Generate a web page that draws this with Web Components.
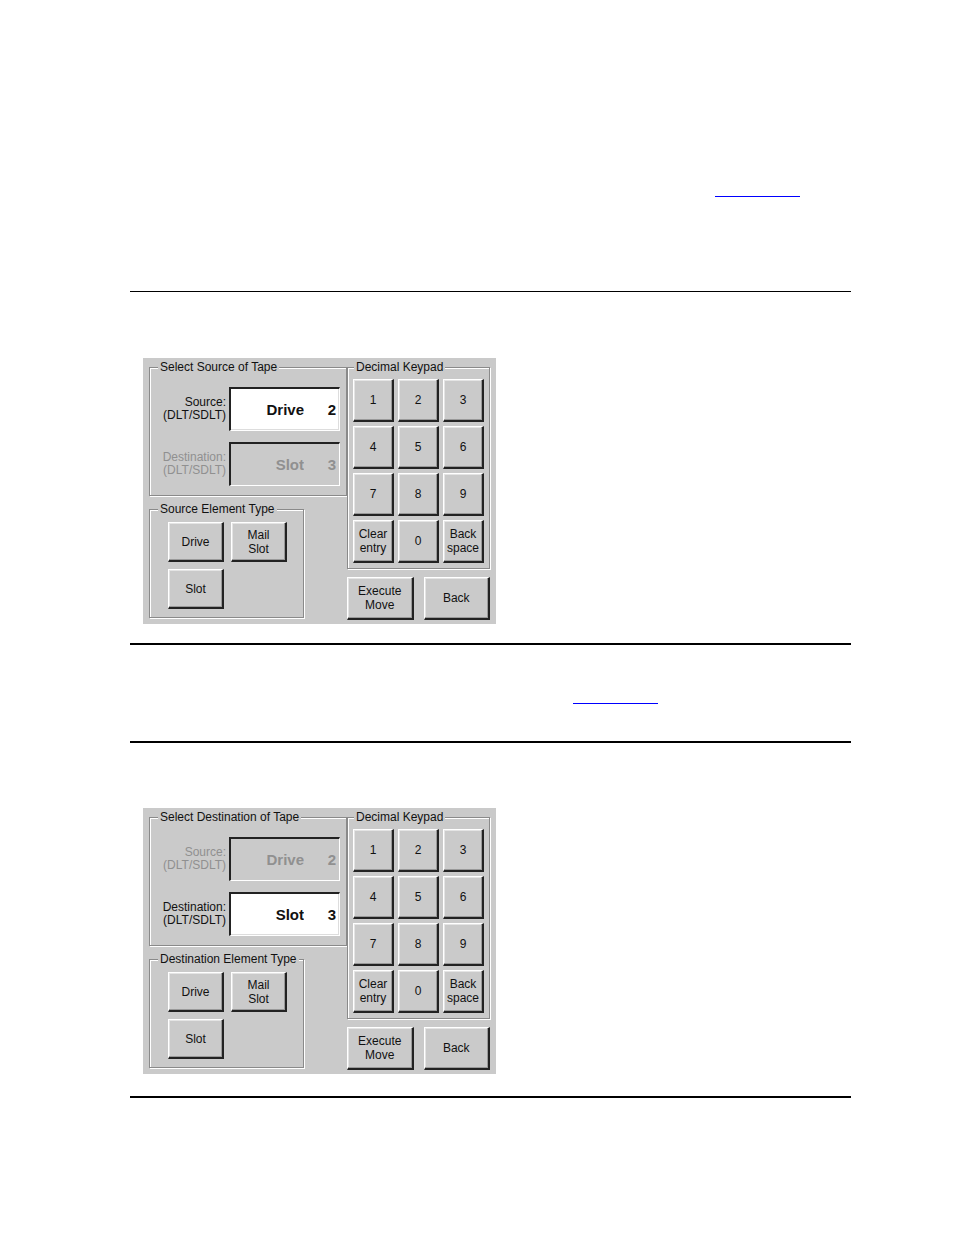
<!DOCTYPE html>
<html lang="en">
<head>
<meta charset="utf-8">
<meta name="viewport" content="width=device-width, initial-scale=1">
<title>Move Tape</title>
<style>
  body {
    margin: 0;
    background: #fff;
    color: #111;
    font: 12px/14px "Liberation Sans", Arial, sans-serif;
  }
</style>
</head>
<body>
<manual-page></manual-page>

<script>
class GroupBox extends HTMLElement {
  constructor() {
    super();
    this.attachShadow({ mode: "open" });
  }

  static get styles() {
    return /* css */`
      :host {
        display: block;
      }

      fieldset {
        margin: 0;
        min-width: 0;
        padding: 0;
        border: 1px solid #8a8a8a;
        box-shadow: 1px 1px #fff, inset 1px 1px #fff;
      }

      legend {
        margin-left: var(--legend-indent, 8px);
        padding: 0 2px;
        line-height: 16px;
        background: var(--face, #cacaca);
        white-space: nowrap;
      }

      .content {
        padding: var(--group-padding, 4px);
      }
    `;
  }

  connectedCallback() {
    this.shadowRoot.innerHTML = /* html */`
    <style>${GroupBox.styles}</style>
    <fieldset>
      <legend>${this.getAttribute("label")}</legend>
      <div class="content"><slot></slot></div>
    </fieldset>`;
  }
}

customElements.define("group-box", GroupBox);

class PushButton extends HTMLElement {
  constructor() {
    super();
    this.attachShadow({ mode: "open" });
  }

  static get styles() {
    return /* css */`
      :host {
        display: grid;
      }

      button {
        padding: 0;
        border: solid;
        border-width: 1px 2px 2px 1px;
        border-color: #fff #222 #222 #fff;
        box-shadow: inset -1px -1px #999, inset 1px 1px #e4e4e4;
        background: var(--face, #cacaca);
        color: inherit;
        font: inherit;
        white-space: pre-line;
      }

      button:active {
        border-width: 2px 1px 1px 2px;
        border-color: #222 #fff #fff #222;
        box-shadow: none;
      }
    `;
  }

  connectedCallback() {
    this.shadowRoot.innerHTML = /* html */`
    <style>${PushButton.styles}</style>
    <button type="button"><slot></slot></button>`;
  }
}

customElements.define("push-button", PushButton);

class TapeField extends HTMLElement {
  constructor() {
    super();
    this.attachShadow({ mode: "open" });
  }

  static get styles() {
    return /* css */`
      :host {
        display: grid;
        grid-template-columns: 1fr 111px;
        gap: 3px;
        align-items: center;
      }

      label {
        text-align: right;
        line-height: 13px;
      }

      .readout {
        display: flex;
        align-items: center;
        box-sizing: border-box;
        height: 44px;
        padding: 0 3px 0 2px;
        border: solid;
        border-width: 2px 1px 1px 2px;
        border-color: #222 #fff #fff #222;
        box-shadow: inset -1px -1px #ddd;
        background: #fff;
      }

      input {
        min-width: 0;
        padding: 0;
        border: 0;
        outline: 0;
        background: none;
        color: inherit;
        font: bold 15px/16px "Liberation Sans", Arial, sans-serif;
        text-align: right;
      }

      .type {
        width: 71px;
      }

      .number {
        flex: 1;
      }

      :host([disabled]) label,
      :host([disabled]) .readout {
        color: #909090;
      }

      :host([disabled]) .readout {
        background: var(--face, #cacaca);
        box-shadow: none;
      }
    `;
  }

  connectedCallback() {
    const off = this.hasAttribute("disabled") ? "disabled" : "readonly";

    this.shadowRoot.innerHTML = /* html */`
    <style>${TapeField.styles}</style>
    <label id="name" for="type">${this.getAttribute("label")}<br>(DLT/SDLT)</label>
    <div class="readout">
      <input class="type" id="type" value="${this.getAttribute("type")}" ${off}>
      <input class="number" aria-labelledby="name" value="${this.getAttribute("number")}" ${off}>
    </div>`;
  }
}

customElements.define("tape-field", TapeField);

class DecimalKeypad extends HTMLElement {
  constructor() {
    super();
    this.attachShadow({ mode: "open" });
  }

  static get styles() {
    return /* css */`
      :host {
        display: block;
        --group-padding: 4px 5px 5px;
        --legend-indent: 6px;
      }

      .keys {
        display: grid;
        grid-template-columns: repeat(3, 41px);
        grid-auto-rows: 43px;
        gap: 4px;
      }
    `;
  }

  connectedCallback() {
    const keys = ["1", "2", "3", "4", "5", "6", "7", "8", "9", "Clear\nentry", "0", "Back\nspace"];

    this.shadowRoot.innerHTML = /* html */`
    <style>${DecimalKeypad.styles}</style>
    <group-box label="Decimal Keypad">
      <div class="keys">
        ${keys.map(key => `<push-button>${key}</push-button>`).join("")}
      </div>
    </group-box>`;
  }
}

customElements.define("decimal-keypad", DecimalKeypad);

class MovePanel extends HTMLElement {
  constructor() {
    super();
    this.attachShadow({ mode: "open" });
  }

  static get styles() {
    return /* css */`
      :host {
        --face: #cacaca;
        display: flex;
        width: fit-content;
        padding: 1px 6px 4px;
        background: var(--face);
      }

      .left {
        display: flex;
        flex-direction: column;
        gap: 5px;
        width: 198px;
      }

      .fields {
        --group-padding: 12px 6px 9px 2px;
      }

      .rows {
        display: grid;
        gap: 11px;
      }

      .types {
        width: 155px;
        --group-padding: 5px 16px 8px 18px;
      }

      .buttons {
        display: grid;
        grid-template-columns: 1fr 1fr;
        grid-auto-rows: 40px;
        gap: 7px;
      }

      .right {
        display: flex;
        flex-direction: column;
        gap: 8px;
      }

      .actions {
        display: grid;
        grid-template-columns: 1fr 1fr;
        grid-auto-rows: 43px;
        gap: 10px;
      }
    `;
  }

  connectedCallback() {
    const active = this.getAttribute("active");
    const source = active === "Source" ? "" : "disabled";
    const destination = active === "Destination" ? "" : "disabled";

    this.shadowRoot.innerHTML = /* html */`
    <style>${MovePanel.styles}</style>
    <div class="left">
      <group-box class="fields" label="Select ${active} of Tape">
        <div class="rows">
          <tape-field label="Source:" type="Drive" number="2" ${source}></tape-field>
          <tape-field label="Destination:" type="Slot" number="3" ${destination}></tape-field>
        </div>
      </group-box>
      <group-box class="types" label="${active} Element Type">
        <div class="buttons">
          <push-button>Drive</push-button>
          <push-button>Mail\nSlot</push-button>
          <push-button>Slot</push-button>
        </div>
      </group-box>
    </div>
    <div class="right">
      <decimal-keypad></decimal-keypad>
      <div class="actions">
        <push-button>Execute\nMove</push-button>
        <push-button>Back</push-button>
      </div>
    </div>`;
  }
}

customElements.define("move-panel", MovePanel);

class ManualPage extends HTMLElement {
  constructor() {
    super();
    this.attachShadow({ mode: "open" });
  }

  static get styles() {
    return /* css */`
      :host {
        display: block;
        padding: 0 103px 137px 130px;
      }

      .reference {
        display: flex;
        justify-content: flex-end;
      }

      .reference a {
        width: 85px;
        border-bottom: 1px solid #00f;
      }

      .intro {
        padding: 182px 51px 94px 0;
      }

      .next {
        padding: 44px 193px 37px 0;
      }

      .reference a::before {
        content: "";
        display: block;
        height: 14px;
      }

      figure {
        margin: 0;
        padding: 66px 0 19px 13px;
        border: solid #000;
        border-width: 1px 0 2px;
      }

      .next + figure {
        padding: 65px 0 22px 13px;
        border-top-width: 2px;
      }
    `;
  }

  connectedCallback() {
    this.shadowRoot.innerHTML = /* html */`
    <style>${ManualPage.styles}</style>
    <div class="reference intro"><a href="#source" aria-label="Source screen"></a></div>
    <figure id="source">
      <move-panel active="Source"></move-panel>
    </figure>
    <div class="reference next"><a href="#destination" aria-label="Destination screen"></a></div>
    <figure id="destination">
      <move-panel active="Destination"></move-panel>
    </figure>`;
  }
}

customElements.define("manual-page", ManualPage);
</script>
</body>
</html>
